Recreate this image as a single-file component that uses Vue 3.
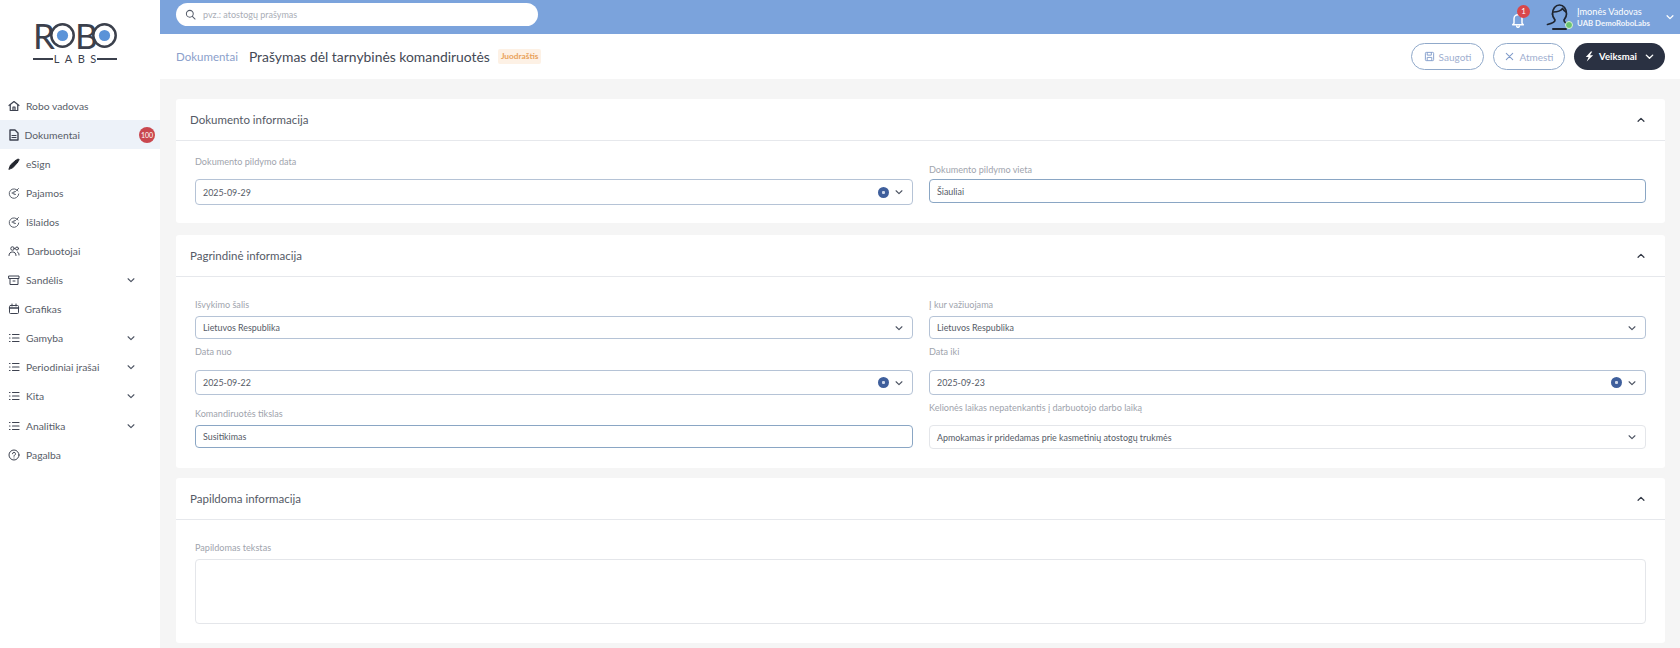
<script setup>
const menu = [
  { label: 'Robo vadovas', icon: 'home' },
  { label: 'Dokumentai', icon: 'doc', active: true, badge: '100' },
  { label: 'eSign', icon: 'pen' },
  { label: 'Pajamos', icon: 'coin' },
  { label: 'Išlaidos', icon: 'coin' },
  { label: 'Darbuotojai', icon: 'users' },
  { label: 'Sandėlis', icon: 'box', more: true },
  { label: 'Grafikas', icon: 'cal' },
  { label: 'Gamyba', icon: 'list', more: true },
  { label: 'Periodiniai įrašai', icon: 'list', more: true },
  { label: 'Kita', icon: 'list', more: true },
  { label: 'Analitika', icon: 'list', more: true },
  { label: 'Pagalba', icon: 'help' },
]
</script>

<template>
  <div class="app">
    <aside class="side">
      <div class="logo">
        <div class="robo">
          <span>R</span>
          <svg viewBox="0 0 25 25" class="eye"><circle cx="12.5" cy="12.5" r="11.2" fill="none" stroke="#3b404c" stroke-width="2.5"/><circle cx="12.5" cy="12.5" r="5.6" fill="#5b93d8"/></svg>
          <span>B</span>
          <svg viewBox="0 0 25 25" class="eye"><circle cx="12.5" cy="12.5" r="11.2" fill="none" stroke="#3b404c" stroke-width="2.5"/><circle cx="12.5" cy="12.5" r="5.6" fill="#5b93d8"/></svg>
        </div>
        <div class="labs"><i></i><span>LABS</span><i></i></div>
      </div>
      <nav class="menu">
        <div v-for="m in menu" :key="m.label" class="item" :class="{ active: m.active }">
          <svg class="mi" viewBox="0 0 24 24" fill="none" stroke="#3d4250" stroke-width="2" stroke-linecap="round" stroke-linejoin="round">
            <template v-if="m.icon === 'home'"><path d="M2 11l10-8 10 8" stroke-width="2.4"/><path d="M4.500 10v11h15V10" stroke-width="2.4"/><path d="M10 21v-7h4v7" stroke-width="2.4"/></template>
            <template v-else-if="m.icon === 'doc'"><path d="M4 2h10l6 6v14H4z" stroke-width="2.8"/><path d="M8 13h8M8 17h8" stroke-width="2.4"/></template>
            <template v-else-if="m.icon === 'pen'"><path d="M2 22l3-8L16 4l4 4-10 11z" fill="#23262e" stroke="#23262e"/><path d="M18 3l3-1 1 1-1 3z" fill="#23262e" stroke="#23262e"/></template>
            <template v-else-if="m.icon === 'coin'"><path d="M20 8a9.500 9.500 0 1 0 1.500 6" stroke="#5a606c"/><path d="M15 9c-3-1-5 1-5 3s2 4 5 3" stroke="#5a606c"/><path d="M8 12h5" stroke="#5a606c"/><path d="M17 7l4-4" stroke="#5a606c"/></template>
            <template v-else-if="m.icon === 'users'"><circle cx="9" cy="7" r="3.500"/><path d="M2 21c0-5 3-7 7-7s7 2 7 7"/><circle cx="18" cy="7" r="3"/><path d="M19 14c2 1 3 3 3 6"/></template>
            <template v-else-if="m.icon === 'box'"><path d="M2 4h20v5H2z"/><path d="M4 9v12h16V9"/><path d="M10 14h4"/></template>
            <template v-else-if="m.icon === 'cal'"><rect x="3" y="5" width="18" height="16" rx="2"/><path d="M3 10h18" stroke-width="3"/><path d="M8 2v4M16 2v4"/></template>
            <template v-else-if="m.icon === 'list'"><path d="M9 5h13M9 12h13M9 19h13M3 5h1M3 12h1M3 19h1" stroke-width="2.400"/></template>
            <template v-else><circle cx="12" cy="12" r="10"/><path d="M9 9.500a3 3 0 1 1 4 3c-1 .5-1 1-1 2M12 18v.1"/></template>
          </svg>
          <span class="ml" :class="{ tight: m.icon === 'doc' || m.icon === 'cal', wide: m.icon === 'users' }">{{ m.label }}</span>
          <b v-if="m.badge" class="mb">{{ m.badge }}</b>
          <svg v-if="m.more" class="chev mc" viewBox="0 0 12 12"><path d="M2.500 4.500L6 8l3.500-3.500"/></svg>
        </div>
      </nav>
    </aside>

    <main class="main">
      <header class="top">
        <div class="search">
          <svg viewBox="0 0 24 24" class="si" fill="none" stroke="#555c6a" stroke-width="2.200" stroke-linecap="round"><circle cx="10.500" cy="10.500" r="7.500"/><path d="M16 16l6 6"/></svg>
          <span>pvz.: atostogų prašymas</span>
        </div>
        <div class="user">
          <div class="bell">
            <svg viewBox="0 0 24 24" fill="none" stroke="#fff" stroke-width="2.200" stroke-linecap="round" stroke-linejoin="round"><path d="M6 17V10a6 6 0 0 1 12 0v7l2 2H4z"/><path d="M10 21a2 2 0 0 0 4 0"/></svg>
            <em>1</em>
          </div>
          <div class="avatar">
            <svg viewBox="0 0 26 28" fill="none" stroke="#1f2530" stroke-width="1.700" stroke-linecap="round" stroke-linejoin="round"><path d="M6.500 11c0-5.500 3-9 7-9s7 3.500 7 9c0 3-1.800 5-2.500 6 0 2 2 3.500 6 4"/><path d="M6.500 11c0 3 1.800 5 2.500 6 0 2-3 3.500-7.500 4.500"/><path d="M7.500 9c3.500 0 7-1 9-3.500 1 1.500 2.500 3 3.500 3.500"/><path d="M7 26h13" stroke-width="2"/></svg>
            <i></i>
          </div>
          <div class="who"><div class="n1">Įmonės Vadovas</div><div class="n2">UAB DemoRoboLabs</div></div>
          <svg class="chev wc" viewBox="0 0 12 12"><path d="M2.500 4.500L6 8l3.500-3.500"/></svg>
        </div>
      </header>

      <section class="head">
        <span class="crumb">Dokumentai</span>
        <h1>Prašymas dėl tarnybinės komandiruotės</h1>
        <span class="draft">Juodraštis</span>
        <div class="actions">
          <button class="btn ghost save">
            <svg viewBox="0 0 24 24" fill="none" stroke="#7f9ac9" stroke-width="2"><rect x="3" y="3" width="18" height="18" rx="2"/><path d="M7 3v6h9V3M7 21v-7h10v7"/></svg>
            Saugoti
          </button>
          <button class="btn ghost cancel">
            <svg viewBox="0 0 24 24" fill="none" stroke="#7f9ac9" stroke-width="2.200" stroke-linecap="round"><path d="M5 5l14 14M19 5L5 19"/></svg>
            Atmesti
          </button>
          <button class="btn dark">
            <svg viewBox="0 0 24 24" fill="#fff"><path d="M15 1L4 13h6L6 23l14-14h-7l5-8z"/></svg>
            Veiksmai
            <svg class="chev dc" viewBox="0 0 12 12"><path d="M2.500 4.500L6 8l3.500-3.500"/></svg>
          </button>
        </div>
      </section>

      <div class="content">
        <section class="card c1">
          <div class="ch"><span>Dokumento informacija</span><svg class="chev up" viewBox="0 0 12 12"><path d="M2.500 7.500L6 4l3.500 3.500"/></svg></div>
          <div class="grid g1">
            <div class="f">
              <label class="lb10">Dokumento pildymo data</label>
              <div class="inp date"><span>2025-09-29</span><i class="clr"></i><svg class="chev ic" viewBox="0 0 12 12"><path d="M2.500 4.500L6 8l3.500-3.500"/></svg></div>
            </div>
            <div class="f low">
              <label class="lb2">Dokumento pildymo vieta</label>
              <div class="inp focus"><span>Šiauliai</span></div>
            </div>
          </div>
        </section>

        <section class="card c2">
          <div class="ch"><span>Pagrindinė informacija</span><svg class="chev up" viewBox="0 0 12 12"><path d="M2.500 7.500L6 4l3.500 3.500"/></svg></div>
          <div class="grid g2">
            <div class="f">
              <label class="lb4">Išvykimo šalis</label>
              <div class="inp"><span>Lietuvos Respublika</span><svg class="chev ic" viewBox="0 0 12 12"><path d="M2.500 4.500L6 8l3.500-3.500"/></svg></div>
            </div>
            <div class="f">
              <label class="lb4">Į kur važiuojama</label>
              <div class="inp"><span>Lietuvos Respublika</span><svg class="chev ic" viewBox="0 0 12 12"><path d="M2.500 4.500L6 8l3.500-3.500"/></svg></div>
            </div>
            <div class="f">
              <label class="lb11">Data nuo</label>
              <div class="inp date"><span>2025-09-22</span><i class="clr"></i><svg class="chev ic" viewBox="0 0 12 12"><path d="M2.500 4.500L6 8l3.500-3.500"/></svg></div>
            </div>
            <div class="f">
              <label class="lb11">Data iki</label>
              <div class="inp date"><span>2025-09-23</span><i class="clr"></i><svg class="chev ic" viewBox="0 0 12 12"><path d="M2.500 4.500L6 8l3.500-3.500"/></svg></div>
            </div>
            <div class="f low">
              <label class="lb4">Komandiruotės tikslas</label>
              <div class="inp focus"><span>Susitikimas</span></div>
            </div>
            <div class="f">
              <label class="lb10">Kelionės laikas nepatenkantis į darbuotojo darbo laiką</label>
              <div class="inp soft"><span>Apmokamas ir pridedamas prie kasmetinių atostogų trukmės</span><svg class="chev ic" viewBox="0 0 12 12"><path d="M2.500 4.500L6 8l3.500-3.500"/></svg></div>
            </div>
          </div>
        </section>

        <section class="card c3">
          <div class="ch"><span>Papildoma informacija</span><svg class="chev up" viewBox="0 0 12 12"><path d="M2.500 7.500L6 4l3.500 3.500"/></svg></div>
          <div class="g3">
            <label class="lb4">Papildomas tekstas</label>
            <div class="area"></div>
          </div>
        </section>
      </div>
    </main>
  </div>
</template>

<style>
html, body { margin: 0; background: #fff; }
</style>

<style scoped>
* { box-sizing: border-box; }
.app { width: 1680px; height: 648px; display: flex; overflow: hidden; font-family: "Lato", "Noto Sans", sans-serif; color: #3d4250; background: #fff; }
.chev { width: 12px; height: 12px; fill: none; stroke: #4a5160; stroke-width: 1.500; stroke-linecap: round; stroke-linejoin: round; flex: none; }

.side { width: 160px; flex: none; display: flex; flex-direction: column; align-items: stretch; }
.logo { height: 92px; padding: 23px 0 0 33px; }
.robo { display: flex; align-items: center; height: 25px; font-family: "Lato", sans-serif; font-size: 35px; line-height: 25px; color: #3b404c; width: 84px; }
.robo span { width: 17px; flex: none; }
.eye { width: 25px; height: 25px; flex: none; }
.labs { display: flex; align-items: center; width: 84px; justify-content: space-between; margin-top: 5px; font-family: "Lato", sans-serif; font-size: 11px; line-height: 12px; color: #3b404c; letter-spacing: 5.500px; }
.labs i { display: block; width: 20px; height: 1.500px; background: #3b404c; }
.labs span { margin-right: -5.500px; }
.menu { display: flex; flex-direction: column; margin-top: -1px; }
.item { height: 29.100px; display: flex; align-items: center; padding-left: 8px; font-size: 10.300px; position: relative; color: #585d68; }
.item.active { background: #edf2f9; }
.mi { width: 12px; height: 12px; flex: none; }
.ml { margin-left: 6px; white-space: nowrap; }
.ml.tight { margin-left: 4.500px; }
.ml.wide { margin-left: 7px; }
.mb { position: absolute; left: 139px; top: 7px; width: 16px; height: 16px; border-radius: 50%; background: #c9474f; color: #fff; font-size: 7px; font-weight: 400; display: flex; align-items: center; justify-content: center; }
.mc { position: absolute; left: 126px; top: 9.500px; width: 10px; height: 10px; stroke-width: 1.300; }

.main { flex: 1; min-width: 0; display: flex; flex-direction: column; }
.top { height: 34px; background: #7ba3dc; display: flex; align-items: flex-start; justify-content: space-between; padding: 3px 0 0 16px; flex: none; }
.search { width: 362px; height: 23px; border-radius: 12px; background: #fff; display: flex; align-items: center; padding-left: 9px; font-size: 9px; color: #a9adb6; }
.si { width: 11px; height: 11px; margin-right: 7px; }
.user { display: flex; align-items: center; height: 28px; }
.bell { width: 16px; height: 18px; position: relative; margin-top: 3px; }
.bell svg { width: 16px; height: 16px; display: block; margin-top: 2px; }
.bell em { position: absolute; left: 7px; top: -5px; width: 13px; height: 13px; border-radius: 50%; background: #d9474b; color: #fff; font-size: 8px; font-style: normal; display: flex; align-items: center; justify-content: center; }
.avatar { width: 26px; height: 28px; margin-left: 20px; position: relative; }
.avatar svg { width: 26px; height: 28px; display: block; }
.avatar i { position: absolute; left: 19px; top: 18px; width: 8px; height: 8px; border-radius: 50%; background: #6bc56f; border: 1px solid #d9f0d9; }
.who { margin-left: 5px; color: #fff; width: 88px; }
.n1 { font-size: 9.200px; line-height: 12px; }
.n2 { font-size: 7.800px; line-height: 11px; font-weight: 700; opacity: .9; }
.wc { margin-left: 0; margin-right: 5px; stroke: #fff; width: 10px; height: 10px; }

.head { height: 45px; flex: none; background: #fff; display: flex; align-items: center; padding-left: 16px; padding-right: 15px; }
.crumb { font-size: 11.500px; color: #8ba0cb; }
h1 { margin: 0 0 0 11px; font-size: 13.900px; font-weight: 400; color: #444955; }
.draft { margin-left: 8px; padding: 0 3px; height: 15px; line-height: 15px; font-size: 8.300px; font-weight: 700; color: #e9a25a; background: #fdf1e5; border-radius: 2px; }
.actions { margin-left: auto; display: flex; gap: 9px; }
.btn { height: 27px; border-radius: 14px; display: flex; align-items: center; justify-content: center; gap: 4px; font: 400 10px "Lato", sans-serif; padding: 0; }
.btn svg { width: 11px; height: 11px; }
.ghost { background: #fff; border: 1px solid #90a9ca; color: #9fafd0; }
.save { width: 73px; }
.cancel { width: 72px; }
.dark { width: 91px; background: #2a3142; border: none; color: #fff; font-weight: 700; font-size: 9.500px; margin-left: 0; }
.btn .dc { width: 11px; height: 11px; stroke: #fff; margin-left: 3px; }

.content { flex: 1; background: #f5f5f5; padding: 20px 15px 0 16px; display: flex; flex-direction: column; gap: 10px; }
.card { background: #fff; border-radius: 3px; flex: none; }
.ch { height: 42px; border-bottom: 1px solid #e6e8ec; display: flex; align-items: center; justify-content: space-between; padding: 0 19px 0 14px; font-size: 11.500px; color: #555a66; }
.up { width: 10px; height: 10px; stroke: #333946; stroke-width: 1.500; }
.c1 { height: 124px; }
.c2 { height: 233px; margin-top: 2px; }
.c3 { height: 165px; }
.grid { display: grid; grid-template-columns: 718px 717px; column-gap: 16px; margin-left: 19px; align-items: start; }
.g1 { padding-top: 14px; }
.g2 { padding-top: 21px; row-gap: 6px; }
.f { min-width: 0; }
label { display: block; font-size: 9.100px; line-height: 14px; color: #a0a4ad; white-space: nowrap; }
.lb2 { margin-bottom: 2px; }
.lb4 { margin-bottom: 4px; }
.lb10 { margin-bottom: 10px; }
.lb11 { margin-bottom: 11px; }
.g1 .low { padding-top: 8px; }
.g2 .low { padding-top: 6px; }
.inp { height: 24px; border: 1px solid #b5c3d6; border-radius: 4px; display: flex; align-items: center; padding: 0 8px 0 7px; font-size: 8.900px; color: #555a66; background: #fff; }
.inp > span { flex: 1; }
.inp.date { height: 26px; }
.g2 .inp { height: 23px; }
.g2 .inp.date { height: 25px; }
.g2 .inp.soft { height: 24px; }
.inp.focus { border-color: #8aa6c4; }
.inp.soft { border-color: #e4e6ea; }
.clr { width: 11px; height: 11px; border-radius: 50%; background: #3f5f9c; margin-right: 5px; position: relative; flex: none; }
.clr::after { content: ""; position: absolute; left: 4px; top: 4px; width: 3px; height: 3px; background: #cfd8ea; border-radius: 1px; }
.ic { width: 10px; height: 10px; stroke-width: 1.300; }
.g3 { padding: 21px 19px 0 19px; }
.area { height: 65px; border: 1px solid #e4e6ea; border-radius: 4px; }
</style>
